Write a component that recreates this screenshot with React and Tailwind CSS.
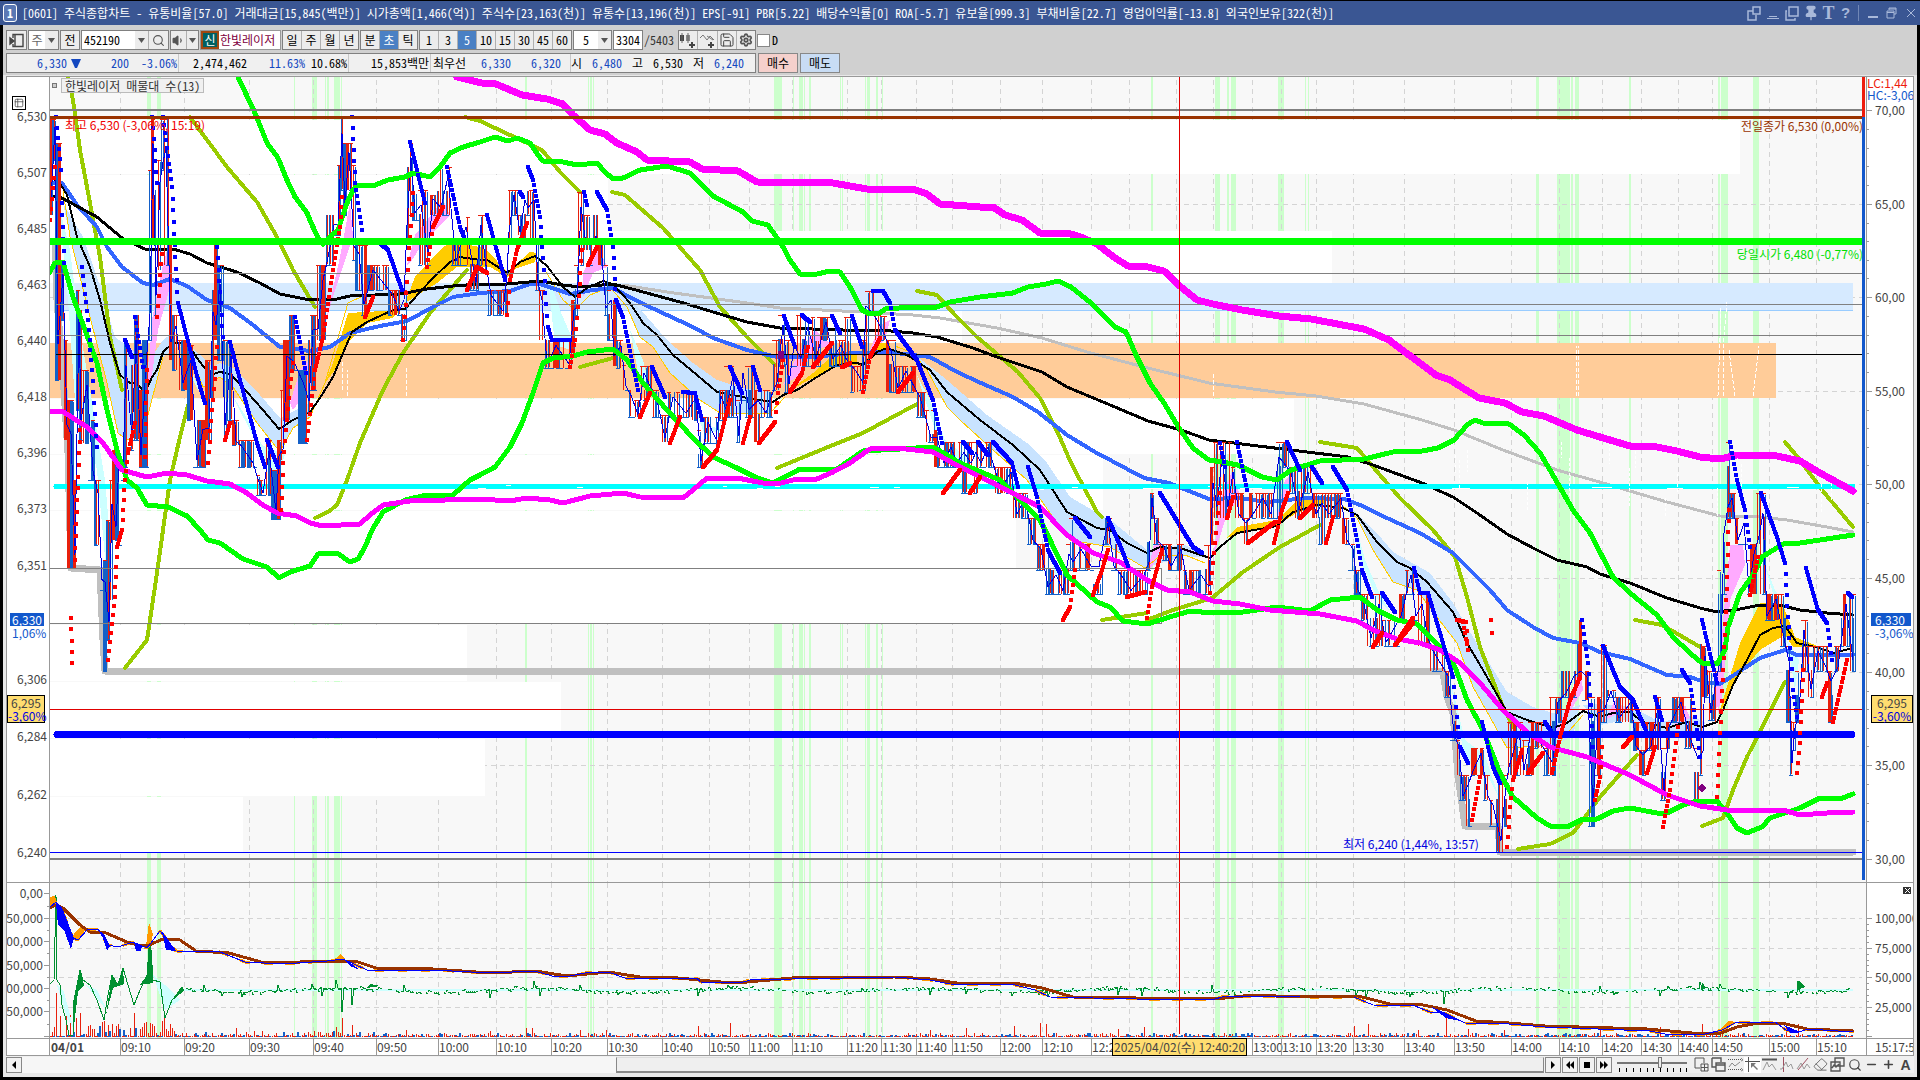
import React, { useState } from 'react';
import { Settings, Save, Search, Pin, Volume1, Eraser, Minus, Plus, Table2 } from 'lucide-react';

// plot area of the price chart, in chart units
const PLOT = { x: 50, y: 77, w: 1816, h: 805 };
const SUB = { x: 50, y: 883, w: 1816, h: 155 };

const titleText =
  '[0601] 주식종합차트 - 유통비율[57.0] 거래대금[15,845(백만)] 시가총액[1,466(억)] 주식수[23,163(천)] 유통수[13,196(천)] EPS[-91] PBR[5.22] 배당수익률[0] ROA[-5.7] 유보율[999.3] 부채비율[22.7] 영업이익률[-13.8] 외국인보유[322(천)]';

const timeTicks = [
  [120, '09:10'], [184, '09:20'], [249, '09:30'], [313, '09:40'], [376, '09:50'], [438, '10:00'], [496, '10:10'],
  [551, '10:20'], [607, '10:30'], [662, '10:40'], [709, '10:50'], [749, '11:00'], [792, '11:10'], [847, '11:20'],
  [881, '11:30'], [916, '11:40'], [952, '11:50'], [1000, '12:00'], [1042, '12:10'], [1091, '12:2'], [1129, ''],
  [1176, ''], [1213, ''], [1252, '13:00'], [1281, '13:10'], [1316, '13:20'], [1353, '13:30'], [1404, '13:40'],
  [1454, '13:50'], [1511, '14:00'], [1559, '14:10'], [1602, '14:20'], [1641, '14:30'], [1678, '14:40'],
  [1712, '14:50'], [1769, '15:00'], [1816, '15:10'],
];

const priceLabels = [
  [116, '6,530'], [172, '6,507'], [228, '6,485'], [284, '6,463'], [340, '6,440'], [396, '6,418'], [452, '6,396'],
  [508, '6,373'], [565, '6,351'], [679, '6,306'], [736, '6,284'], [794, '6,262'], [852, '6,240'],
];

const ratioLabels = [
  [110, '70,00'], [204, '65,00'], [297, '60,00'], [391, '55,00'], [484, '50,00'], [578, '45,00'], [672, '40,00'],
  [765, '35,00'], [859, '30,00'],
];

const subLeft = [[893, '0,00'], [918, '50,000'], [941, '00,000'], [965, '50,000'], [988, '00,000'], [1011, '50,000']];
const subRight = [[918, '100,000'], [948, '75,000'], [977, '50,000'], [1007, '25,000']];

const signals = [
  [147, 4], [157, 4], [294, 1], [312, 5], [325, 1], [327, 2], [334, 6], [341, 1], [525, 2], [588, 1], [590, 2],
  [593, 1], [774, 8], [793, 1], [799, 4], [804, 1], [809, 2], [840, 1], [842, 1], [865, 1], [867, 3], [876, 2],
  [882, 1], [1151, 2], [1215, 5], [1227, 2], [1231, 5], [1278, 6], [1305, 1], [1308, 1], [1536, 3], [1557, 13],
  [1571, 2], [1575, 4], [1629, 2], [1718, 2], [1721, 7], [1753, 6],
];

// volume profile blocks: top, height, right end
const profile = [
  [120, 54, 1740], [175, 56, 608], [231, 52, 1332], [311, 32, 962], [399, 55, 1294], [455, 55, 1103],
  [511, 57, 1016], [569, 54, 1161], [625, 56, 467], [682, 56, 561], [739, 57, 485], [797, 55, 243],
];

const upperMagenta =
  '457,77 482,83 496,84 522,95 547,99 563,104 573,115 590,130 605,134 617,143 637,152 647,160 690,162 702,169 738,171 757,182 833,183 867,189 913,189 927,194 940,204 980,207 993,207 1005,215 1022,220 1040,233 1071,234 1083,238 1097,244 1115,258 1128,266 1148,267 1164,271 1181,287 1197,300 1213,304 1242,310 1279,316 1311,319 1364,329 1389,340 1409,355 1436,375 1450,380 1479,398 1505,403 1522,412 1544,416 1577,430 1600,437 1630,446 1657,447 1677,451 1700,457 1720,459 1737,455 1777,456 1800,461 1820,473 1853,491';
const lowerMagenta =
  '49,411 62,411 87,427 103,443 122,470 147,477 167,473 187,475 207,481 230,484 247,493 263,505 277,513 297,516 310,523 323,526 360,524 370,515 383,505 410,501 480,499 510,501 527,498 550,500 563,503 590,496 623,493 640,497 683,498 693,490 707,478 737,478 763,483 777,484 797,479 817,479 833,472 850,463 870,449 897,448 933,452 960,467 993,483 1020,497 1040,507 1067,535 1093,553 1120,562 1147,580 1167,590 1190,592 1213,601 1240,604 1270,610 1320,614 1357,621 1373,630 1397,639 1420,643 1440,650 1460,663 1480,683 1503,710 1527,732 1550,747 1587,757 1630,775 1667,795 1700,806 1727,810 1783,810 1800,815 1827,813 1853,812';
const upperGreen =
  '238,77 255,113 267,143 278,158 287,180 295,197 307,213 313,227 318,238 323,244 330,237 338,230 347,203 353,190 358,185 373,186 388,180 405,177 413,173 430,177 440,167 450,153 463,147 480,142 495,137 508,141 517,138 530,143 538,155 543,161 563,162 577,165 597,163 605,172 613,179 623,178 640,170 667,166 690,173 713,196 743,212 752,221 768,225 775,235 782,245 790,260 800,274 817,274 830,271 840,272 850,287 862,310 870,314 880,313 885,309 913,307 937,307 950,302 980,297 1013,293 1028,287 1046,284 1058,281 1071,287 1091,303 1115,327 1126,332 1136,355 1150,383 1164,403 1179,428 1193,448 1209,460 1222,462 1238,465 1262,477 1277,480 1291,470 1307,465 1320,461 1364,459 1393,452 1422,451 1438,448 1454,440 1467,425 1475,420 1483,423 1509,424 1524,435 1540,453 1550,470 1573,510 1590,533 1613,577 1630,593 1657,615 1673,637 1690,653 1702,663 1717,664 1725,650 1728,627 1740,593 1753,575 1762,557 1783,544 1800,543 1853,535';
const lowerGreen =
  '49,273 55,263 63,262 73,297 85,330 97,363 107,410 117,450 127,480 137,488 147,505 168,507 187,516 200,530 208,540 220,543 243,559 267,567 279,578 290,572 310,566 318,554 337,553 350,562 358,559 365,547 372,530 383,512 405,500 427,495 453,495 462,487 470,480 480,475 495,467 510,447 522,423 533,393 543,363 553,358 573,356 587,352 613,349 627,360 643,383 667,410 693,438 713,457 737,468 757,478 773,483 783,478 800,469 837,469 850,460 863,451 900,449 933,447 947,455 960,463 1000,480 1017,497 1040,520 1050,540 1067,575 1097,602 1110,607 1123,621 1147,624 1173,616 1190,611 1213,613 1243,612 1277,607 1310,611 1330,600 1360,597 1377,610 1397,620 1417,624 1440,647 1455,667 1467,700 1483,730 1500,773 1513,797 1537,818 1550,826 1567,827 1583,819 1597,819 1613,811 1630,808 1657,813 1667,813 1683,805 1697,801 1717,801 1727,813 1737,828 1747,833 1762,827 1770,818 1800,808 1820,798 1843,798 1853,794';
const slowBlack =
  '49,196 60,197 73,204 97,217 122,238 147,250 173,249 190,254 207,263 237,272 260,283 280,294 310,300 337,299 350,296 400,294 427,289 453,286 480,284 507,284 540,281 563,285 580,287 613,284 647,293 687,304 713,312 747,322 780,328 843,330 867,331 880,330 913,333 937,337 973,348 997,357 1042,372 1067,387 1115,407 1148,421 1181,430 1209,440 1242,444 1307,452 1348,457 1373,465 1422,483 1453,497 1477,513 1507,534 1533,548 1557,560 1587,567 1600,574 1630,583 1667,598 1700,608 1717,612 1740,609 1760,605 1783,606 1800,610 1827,613 1853,615';
const fastBlack =
  '49,179 58,180 67,195 77,237 90,267 100,300 110,343 120,375 130,383 137,383 145,393 152,377 157,370 163,352 173,343 187,343 197,358 210,375 220,372 230,374 247,392 263,410 279,429 293,420 310,412 320,398 333,377 343,353 352,332 367,322 393,310 405,309 420,292 433,278 450,262 460,257 480,260 487,260 495,265 507,273 520,262 535,256 547,266 563,287 575,297 587,288 603,281 613,284 630,303 643,323 657,335 673,355 697,375 717,392 733,395 747,398 773,402 783,395 797,390 817,377 837,365 857,363 863,365 877,352 887,348 907,355 930,370 947,392 980,420 1013,445 1040,470 1067,512 1097,528 1110,530 1127,543 1147,553 1160,547 1183,549 1210,558 1220,547 1237,533 1277,526 1293,512 1317,505 1343,508 1357,515 1377,542 1397,562 1410,568 1427,582 1453,612 1467,643 1483,670 1507,712 1527,720 1553,728 1567,723 1583,711 1600,717 1613,713 1630,712 1643,722 1667,728 1687,722 1702,727 1717,722 1723,710 1733,685 1747,660 1760,635 1773,628 1785,626 1797,643 1820,648 1833,653 1853,648';
const blueMa =
  '49,183 62,183 77,205 97,227 107,247 122,267 143,283 153,285 170,279 187,286 207,300 230,308 253,325 280,347 310,351 330,347 350,333 380,326 407,321 433,307 453,297 480,293 510,291 530,284 540,284 570,294 593,290 613,288 637,301 667,315 693,327 713,338 747,350 777,357 813,357 853,353 887,352 930,357 957,372 981,383 1013,397 1038,412 1067,435 1095,452 1144,478 1169,483 1209,499 1238,498 1267,502 1307,498 1344,499 1360,505 1389,519 1420,533 1453,553 1477,577 1490,590 1507,610 1533,627 1553,638 1580,643 1600,652 1630,659 1667,675 1690,677 1707,683 1720,684 1737,673 1760,658 1785,650 1797,655 1853,655';
const grayMa =
  '623,285 667,292 747,303 780,308 863,312 913,315 940,318 997,328 1042,338 1087,352 1144,367 1209,383 1275,392 1316,396 1364,404 1422,420 1454,430 1503,450 1557,470 1603,483 1667,502 1720,516 1760,517 1787,520 1827,527 1853,532';
const lowTrail =
  '55,245 57,300 64,390 68,453 71,568 100,570 103,640 105,671 1443,672 1447,697 1453,713 1458,775 1465,826 1498,826 1500,852 1853,852';

const arcs = [
  '68,77 73,100 80,150 90,203 100,257 110,337 122,390',
  '125,668 147,640 157,573 163,530 170,480 180,437 188,405',
  '190,117 227,167 257,202 277,237 293,270 315,307',
  '315,518 328,512 337,505 347,480 360,443 383,390 403,353 430,313 467,270',
  '465,117 480,121 510,135 542,150 560,172 580,192',
  '612,192 625,195 663,228 700,270 720,307 747,337 775,365',
  '580,367 613,358',
  '777,468 833,445 863,433 917,404',
  '917,291 937,295 955,315 977,337 1018,372 1040,398 1058,433 1071,463 1097,512 1102,517',
  '1102,620 1147,613',
  '1147,620 1173,610 1212,598 1243,572 1280,547 1320,525',
  '1320,442 1357,448 1373,467 1400,498 1433,530 1455,557 1467,597 1480,647 1503,707 1513,727',
  '1518,849 1550,844 1573,833 1600,797 1637,755',
  '1635,620 1662,625 1702,648',
  '1702,826 1723,818 1733,790 1747,757 1785,682',
  '1785,442 1800,460 1822,490 1853,527',
];

const blueClouds = [
  '63,203 83,237 97,277 115,337 133,350 143,370 163,340 170,335 180,345 163,357 150,407 143,435 127,440 118,433 107,383 90,317 70,237',
  '187,343 213,367 220,363 233,368 253,387 280,418 310,403 310,417 293,428 280,452 257,423 233,387 220,377 203,387',
  '617,287 647,317 667,340 693,363 717,380 743,388 773,393 770,413 747,413 720,413 700,400 670,373 653,347 640,337 627,307',
  '913,353 947,380 987,415 1027,443 1047,463 1070,497 1113,522 1147,550 1185,545 1210,558 1185,556 1145,568 1110,547 1070,540 1050,513 1027,480 993,450 960,420 947,407 927,370',
  '1353,510 1377,533 1393,552 1430,573 1453,603 1473,637 1507,692 1533,707 1553,713 1580,705 1573,735 1557,745 1507,748 1490,717 1473,687 1457,643 1433,612 1417,590 1393,582 1373,550',
  '1583,705 1600,704 1630,706 1660,722 1690,716 1705,722 1702,733 1665,735 1643,730 1625,720 1600,725',
];
const goldClouds = [
  '325,383 333,363 348,313 400,310 393,318 367,323 350,340 337,367',
  '405,303 415,277 443,247 453,242 480,247 487,250 507,272 530,252 537,253 535,262 517,268 507,277 490,267 457,267 437,283',
  '790,390 813,373 833,355 857,355 857,365 833,367 813,378',
  '863,363 880,343 890,343 890,348 877,353',
  '1227,538 1237,527 1277,520 1297,500 1327,497 1323,505 1297,513 1277,525 1240,533',
  '1720,710 1740,643 1760,603 1783,605 1795,637 1820,647 1793,647 1785,635 1760,650 1733,683 1723,707',
];
const goldTrails = [
  '63,190 70,237 90,317 107,383 118,433 127,440 143,435 150,407 163,357',
  '187,345 203,387 220,377 233,387 257,423 280,452 293,428 310,417 325,383 348,303 365,295',
  '545,270 563,300 575,310 590,295 610,287 627,307 640,337 653,347 670,373 700,400 720,413 770,413 785,397',
  '895,346 913,353 927,370 947,407 960,420 993,450 1027,480 1050,513 1070,540 1110,547 1145,568 1160,556 1185,555 1205,563',
  '1343,506 1357,518 1373,550 1393,582 1417,590 1433,612 1457,643 1473,687 1490,717 1507,748 1557,745 1583,715',
];
const pinkClouds = [
  '147,393 152,320 163,265 170,240 172,280 158,330 152,375',
  '290,403 300,370 320,347 340,257 350,203 353,237 333,297 317,353 310,387 293,410',
  '407,265 415,235 443,200 450,215 425,240 410,263',
  '583,273 597,243 607,267 593,273 583,297',
  '783,385 800,350 815,330 832,345 815,350 797,377',
  '868,355 880,325 890,320 885,340',
  '1148,570 1155,540 1162,545 1153,565',
  '1213,560 1220,500 1232,472 1240,495 1225,520',
  '1275,525 1285,480 1297,470 1290,485',
  '1550,745 1570,700 1580,665 1583,690 1565,720',
  '1605,720 1615,700 1625,710',
  '1672,728 1685,705 1690,718',
  '1718,715 1723,620 1730,545 1743,545 1745,565 1730,600 1724,680',
  '1705,725 1712,715 1715,690 1722,640 1722,700',
];
const cyanClouds = [
  '60,210 68,300 75,400 90,440 97,470 108,590 112,560 105,480 95,420 80,330 70,250',
  '180,345 200,390 215,395 205,402 190,375',
  '232,395 255,440 275,480 285,455 262,445 245,415',
  '547,270 562,315 575,345 570,350 555,345',
  '630,330 640,383 652,395 643,360',
  '695,410 705,435 722,430 708,425',
  '917,375 930,400 945,440 970,460 960,463 935,430',
  '1042,510 1055,560 1066,580 1055,575',
  '1352,510 1365,560 1378,590 1390,612 1378,600 1360,560',
  '1448,670 1465,740 1485,755 1500,800 1490,780 1465,760',
  '1763,560 1775,590 1785,605 1775,600',
  '1787,640 1795,690 1799,660',
];

// trailing stop dots
const fallRuns = [
  '56,117 61,170', '62,203 64,263', '82,267 88,320 92,370 97,447', '125,340 132,357', '135,317 143,367',
  '152,117 157,183', '163,117 172,187 175,257 178,303 200,387 205,403', '217,247 223,337',
  '230,342 240,380 257,443 265,467', '267,440 278,467', '295,317 306,373', '352,117 355,183 362,230',
  '380,243 388,250 402,290', '410,142 425,203', '447,167 460,227 465,240', '487,215 505,280', '520,192 523,197',
  '528,167 533,180 540,217 542,247 548,327 552,340 570,340', '584,192 587,205',
  '597,192 607,210 613,247 616,300 623,317 638,390', '652,367 665,397', '683,392 695,393 702,420',
  '730,367 742,393', '753,367 760,390', '784,316 795,347', '802,315 810,322', '832,316 840,333', '852,316 862,347',
  '873,291 883,291 890,303 895,330 917,360 933,400 942,443', '963,442 972,453', '978,442 988,455',
  '993,442 1012,463 1018,487', '1028,467 1037,497 1048,550 1060,573', '1075,518 1090,537', '1108,518 1122,550 1128,566',
  '1160,493 1193,547 1202,553', '1220,443 1225,467', '1237,442 1247,490', '1287,442 1300,470', '1312,467 1322,483',
  '1333,467 1347,490 1357,540 1362,570 1372,597', '1382,593 1395,612',
  '1414,568 1420,593 1428,593 1440,633 1453,677 1460,747 1468,763', '1482,722 1493,767 1500,783', '1545,722 1552,733',
  '1582,620 1588,663 1593,747', '1603,646 1620,687 1633,700 1647,733', '1655,697 1662,720',
  '1682,670 1690,683 1697,730 1700,757', '1702,620 1717,683', '1730,442 1737,480 1745,510 1750,547',
  '1761,493 1777,537 1785,563 1788,617 1793,690 1797,717', '1806,568 1818,610 1827,623 1832,660', '1848,593 1852,597',
];
const riseRuns = [
  '50,220 55,167', '75,560 77,500 80,430', '71,618 72,663', '108,660 115,597 117,547 122,530 125,480 128,453 135,423',
  '145,457 147,370', '157,317 163,243', '208,463 217,347', '225,440 230,423', '281,510 283,463 290,387 293,363',
  '307,440 315,370 323,337 333,270 340,227 342,197', '365,317 373,297', '403,340 408,270 413,193',
  '427,267 433,227 443,207', '467,290 477,267 487,273', '507,315 510,280 517,250 527,223',
  '570,367 575,340 578,307 582,250', '588,265 597,247', '640,417 650,393', '670,443 680,417',
  '703,467 717,450 723,427 730,400', '743,443 750,417', '759,443 775,422 778,393 783,360', '790,392 802,373 808,347',
  '813,367 832,343', '842,367 850,363', '863,392 870,357 880,338', '898,392 913,373', '943,493 960,470',
  '970,493 980,477', '1063,620 1070,607 1075,570', '1093,595 1102,570 1108,550', '1147,618 1152,587 1162,550',
  '1127,597 1145,592', '1210,593 1215,543 1220,493', '1227,518 1233,497', '1248,543 1275,522',
  '1274,543 1282,510 1288,493', '1300,518 1313,505', '1326,543 1333,517', '1373,647 1382,633', '1395,645 1413,623',
  '1400,637 1413,618', '1457,620 1466,622 1468,650 1463,622', '1491,620 1492,633', '1472,820 1480,777',
  '1507,847 1510,807 1513,780 1522,750', '1528,773 1543,753', '1552,773 1560,737 1570,700 1580,677',
  '1595,800 1600,777 1602,747', '1623,747 1632,737', '1647,773 1655,747', '1663,827 1670,790 1678,727',
  '1717,797 1720,743 1723,670 1727,577 1729,510', '1750,595 1758,557', '1797,773 1800,743 1803,670',
  '1822,697 1827,683', '1833,722 1847,660',
];

// traded range along the day: x, high, low
const range =
  '50,119,215 54,119,160 57,143,380 62,263,320 66,340,440 70,400,568 74,480,568 78,290,410 80,310,440 86,370,443 92,420,480 97,480,545 101,520,590 104,560,671 108,520,640 111,480,600 115,450,540 118,440,545 122,390,480 125,340,467 131,365,450 135,315,440 140,390,467 145,340,467 149,170,340 152,119,240 155,190,315 159,160,270 162,119,170 165,119,265 170,240,360 175,315,370 182,340,390 190,345,420 196,420,467 202,420,467 208,360,440 212,290,400 215,240,340 219,265,360 224,340,440 230,340,420 235,420,445 240,440,467 252,440,467 257,475,495 262,480,495 268,440,495 275,470,519 278,440,519 282,390,460 286,340,420 293,315,370 303,370,443 308,340,412 312,315,390 317,265,340 322,265,340 327,215,265 333,215,265 337,165,235 341,119,190 344,143,215 348,143,190 353,165,260 358,245,290 363,245,315 372,265,290 385,265,290 392,290,315 398,290,315 403,290,340 406,143,240 410,143,215 414,170,220 420,190,265 427,190,265 432,195,215 440,167,215 447,167,215 455,240,265 465,217,265 475,240,290 480,215,265 485,240,270 490,290,315 502,290,315 506,265,315 508,190,240 513,190,215 519,215,235 524,190,240 527,167,215 533,190,240 537,240,290 541,290,340 546,340,368 555,340,368 568,340,368 573,300,350 576,265,315 580,192,265 585,215,250 590,240,265 595,215,240 600,240,265 605,265,315 610,290,340 613,300,366 620,340,368 625,365,390 630,390,417 637,400,417 643,366,400 650,366,392 655,390,417 664,415,442 672,392,417 685,392,417 695,392,420 700,430,467 707,417,443 715,417,443 720,390,420 725,366,417 732,366,417 738,400,442 742,366,400 748,366,417 757,390,442 765,390,417 770,392,417 776,340,390 782,315,366 788,340,392 793,340,366 800,315,366 807,317,366 815,317,366 825,317,340 832,320,366 840,340,366 845,317,366 855,366,392 862,340,390 865,291,366 870,291,315 876,315,340 884,316,340 890,340,392 897,366,392 905,366,392 914,366,392 919,392,417 930,410,442 936,430,467 943,442,467 950,442,467 956,442,467 963,442,493 970,442,467 975,442,493 980,442,467 987,442,467 1000,467,493 1010,467,493 1016,493,518 1024,493,518 1032,518,544 1040,544,570 1047,544,594 1055,570,594 1062,570,594 1068,544,594 1072,518,570 1080,544,570 1090,544,570 1098,560,594 1103,520,544 1107,518,544 1113,544,570 1120,570,594 1130,570,594 1143,570,594 1148,518,570 1151,493,518 1156,518,544 1163,544,560 1170,544,570 1180,544,570 1188,570,594 1200,570,594 1208,545,594 1212,467,545 1216,442,518 1221,442,518 1227,442,518 1232,467,493 1238,493,518 1245,518,544 1252,493,518 1262,493,518 1270,493,518 1278,442,518 1283,442,467 1290,467,493 1298,467,518 1307,467,493 1315,493,518 1321,493,544 1328,493,518 1340,493,518 1346,518,544 1352,544,570 1357,570,594 1362,594,620 1370,594,646 1378,594,646 1385,620,646 1395,620,646 1400,594,620 1410,570,594 1415,594,620 1421,594,646 1427,594,646 1432,646,671 1442,646,671 1447,671,697 1453,697,740 1458,740,775 1462,775,800 1467,775,826 1472,748,775 1480,748,775 1487,775,800 1492,800,826 1500,775,852 1505,775,826 1508,722,775 1518,722,775 1523,740,775 1530,722,775 1540,722,748 1546,748,775 1552,697,775 1557,697,722 1565,671,697 1573,671,697 1580,620,680 1586,671,700 1592,697,826 1597,697,775 1603,645,722 1610,690,697 1618,697,722 1630,697,722 1635,722,750 1642,750,775 1650,722,750 1657,697,750 1663,748,800 1668,722,748 1672,697,722 1680,697,722 1690,697,748 1697,748,800 1702,620,775 1704,646,697 1710,671,720 1715,671,722 1720,570,671 1723,518,594 1727,442,518 1731,493,518 1737,518,544 1743,518,544 1748,560,594 1753,544,594 1758,493,544 1762,493,594 1766,594,620 1775,594,620 1783,594,646 1788,646,722 1791,697,775 1794,722,750 1798,671,722 1803,620,671 1810,646,697 1817,646,671 1825,646,671 1830,671,722 1837,646,671 1845,594,646 1852,594,671';

const subBrown =
  '49,908 56,905 63,908 80,925 90,932 106,933 127,942 141,946 149,945 163,939 180,940 196,951 229,953 261,962 282,963 318,961 355,961 376,968 433,969 490,973 535,971 567,976 608,972 640,977 667,977 721,982 747,982 792,978 895,977 930,979 957,983 1020,984 1042,988 1073,997 1136,998 1216,999 1252,995 1300,997 1358,996 1390,1004 1423,1005 1447,1010 1476,1021 1509,1023 1545,1026 1647,1029 1692,1033 1721,1033 1737,1027 1758,1023 1786,1024 1807,1029 1853,1031';
const subBlue =
  '49,908 56,902 61,907 73,938 78,940 88,929 98,929 108,945 118,947 133,942 147,948 160,931 176,951 220,952 245,962 282,964 327,961 343,959 367,970 433,970 490,973 535,971 552,976 570,976 590,972 608,972 625,978 667,978 697,978 700,982 740,983 750,980 792,979 895,977 930,980 950,984 1015,985 1035,990 1050,997 1136,999 1212,1000 1225,996 1300,997 1354,997 1373,1005 1415,1006 1430,1012 1445,1013 1465,1023 1509,1024 1545,1027 1650,1031 1665,1034 1705,1034 1722,1030 1735,1023 1775,1022 1786,1030 1796,1033 1808,1029 1853,1032';
const subGreenHead =
  '49,985 54,980 56,895 57,980 60,985 62,1005 66,1020 69,1035 73,1035 74,1000 77,985 80,970 83,980 90,985 97,1000 104,1020 108,995 112,975 118,985 123,968 128,985 134,1005 140,990 147,975 150,935 153,980 160,982 165,1018 172,1000 184,990';
const greenSpikes = {
  205: 985, 222: 996, 242: 997, 279: 985, 313: 984, 323: 996, 337: 980, 343: 1012, 352: 1005, 364: 988, 405: 985,
  491: 998, 535: 981, 541: 996, 581: 985, 619: 995, 699: 996, 729: 985, 863: 988, 931: 995, 967: 994, 1013: 996,
  1049: 997, 1119: 995, 1143: 996, 1213: 985, 1357: 996, 1367: 998, 1411: 997, 1445: 1004, 1601: 986, 1615: 995,
  1661: 996, 1669: 986, 1701: 982, 1721: 984, 1789: 998, 1799: 981, 1843: 993,
};
const volumeSpikes = {
  56: 993, 60: 1016, 66: 1006, 70: 1015, 76: 1018, 80: 1013, 90: 1025, 102: 1022, 104: 1021, 112: 1024, 134: 1013,
  144: 1023, 146: 1022, 150: 1023, 152: 1024, 162: 1021, 164: 1018, 170: 1024, 236: 1028, 336: 1027, 342: 1018,
  352: 1025, 406: 1030, 490: 1031, 526: 1028, 532: 1028, 580: 1030, 606: 1030, 698: 1026, 730: 1023, 930: 1030,
  966: 1028, 1014: 1026, 1040: 1023, 1046: 1024, 1118: 1029, 1144: 1027, 1354: 1026, 1368: 1024, 1418: 1030,
  1446: 1014, 1468: 1029, 1504: 1030, 1600: 1030, 1660: 1027, 1702: 1024, 1722: 1027, 1786: 1026, 1798: 1024,
};

const parse = (s) => s.split(' ').map((p) => p.split(',').map(Number));

const noise = (n) => {
  const v = Math.sin(n * 12.9898) * 43758.5453;
  return v - Math.floor(v);
};

// early trading is dense, so bars are drawn bold there and thin afterwards
const buildCandles = () => {
  const pts = parse(range);
  const out = { red: '', blue: '', redBold: '', blueBold: '' };
  let i = 0;
  for (let x = 50; x <= 1853; x += 3) {
    while (i < pts.length - 1 && Math.abs(pts[i + 1][0] - x) <= Math.abs(pts[i][0] - x)) i++;
    const [, hi, lo] = pts[i];
    const tall = lo - hi > 30;
    const r = noise(x);
    const bold = noise(x + 11) < (x < 370 ? 0.6 : 0.22);
    const top = tall && x > 370 && r > 0.4 ? hi + 24 : hi;
    const bar = `M${x + 0.5} ${top}V${lo}`;
    if (r < 0.45) out[bold ? 'redBold' : 'red'] += bar;
    else if (r < 0.9) out[bold ? 'blueBold' : 'blue'] += bar;
    if (r > 0.2 && r < 0.6) out.blue += `M${x + 2.5} ${hi + 2}V${lo}`;
    if (r > 0.55 && r < 0.85) out.red += `M${x + 1.5} ${top}V${lo - 1}`;
    if (r < 0.7) out.red += `M${x - 1} ${hi + 0.5}h4`;
    if (r > 0.35) out.blue += `M${x - 1} ${lo + 0.5}h4`;
  }
  return out;
};

// one dot per unit of x: flat runs merge into a line, steep ones stay dotted
const buildDots = (runs) =>
  runs
    .map((run) => {
      const pts = parse(run);
      let d = '';
      for (let i = 1; i < pts.length; i++) {
        const [x1, y1] = pts[i - 1];
        const [x2, y2] = pts[i];
        const n = Math.max(1, Math.abs(x2 - x1), Math.round(Math.abs(y2 - y1) / 11));
        for (let k = 0; k <= n; k++) {
          d += `M${Math.round(x1 + ((x2 - x1) * k) / n) - 2} ${Math.round(y1 + ((y2 - y1) * k) / n)}h4`;
        }
      }
      return d;
    })
    .join('');

const buildPriceLine = () =>
  parse(range)
    .map(([x, hi, lo], i) => `${x + 1},${i % 2 ? hi + (lo - hi) * 0.2 : hi + (lo - hi) * 0.85}`)
    .join(' ');

const buildOscillator = () => {
  let d = '';
  for (let x = 186; x <= 1853; x += 2) {
    const spike = greenSpikes[x] || greenSpikes[x + 1];
    const base = 990 + Math.round(Math.sin(x / 31) * 2);
    if (spike) d += `M${x - 3} ${base}h2L${x} ${spike}L${x + 2} ${base}h3`;
    else if (noise(x) > 0.35) d += `M${x} ${base}v${Math.round(noise(x + 3) * 4) - 2}h2`;
  }
  return d;
};

const buildVolume = () => {
  let red = '';
  let blue = '';
  for (let x = 50; x <= 1852; x += 2) {
    const limit = x < 180 ? 12 : x < 380 ? 5 : 3;
    const top = volumeSpikes[x] || 1036 - Math.round(noise(x + 1) ** 2 * limit);
    if (noise(x) > 0.4 || volumeSpikes[x]) red += `M${x + 0.5} 1037V${top}`;
    else blue += `M${x} 1037V${top}`;
  }
  return { red, blue };
};

const candles = buildCandles();
const fallDots = buildDots(fallRuns);
const riseDots = buildDots(riseRuns);
const priceLine = buildPriceLine();
const oscillator = buildOscillator();
const volume = buildVolume();

const topPct = (y, box) => ({ top: `${((y - box.y) / box.h) * 100}%` });
const leftPct = (x) => ({ left: `${((x - PLOT.x) / PLOT.w) * 100}%` });

const Line = ({ points, color, width, ...rest }) => (
  <polyline points={points} fill="none" stroke={color} strokeWidth={width} strokeLinejoin="round" strokeLinecap="round" {...rest} />
);

const PriceChart = () => (
  <svg className="block h-full w-full" viewBox="50 77 1816 805" preserveAspectRatio="none" shapeRendering="crispEdges" aria-label="가격 차트">
    <rect x="50" y="77" width="1816" height="805" fill="#f8f8f8" />
    {signals.map(([x, w]) => <rect key={x} x={x} y="77" width={w} height="805" fill="#ccffcc" />)}
    {timeTicks.map(([x]) => <path key={x} d={`M${x + 0.5} 80V882`} stroke="#d4d4d4" strokeDasharray="5 4" />)}
    {ratioLabels.slice(1).map(([y]) => <path key={y} d={`M50 ${y + 0.5}H1862`} stroke="#d4d4d4" strokeDasharray="5 4" />)}
    {profile.map(([y, h, end]) => <rect key={y} x="50" y={y} width={end - 50} height={h} fill="#fff" />)}
    <rect x="56" y="283" width="1797" height="27" fill="#d6eaff" />
    <path d="M56 310.5H1853" stroke="#99ccff" />
    <rect x="50" y="343" width="1726" height="55" fill="#ffcc99" />

    {blueClouds.map((p) => <polygon key={p} points={p} fill="#c8e3ff" />)}
    {cyanClouds.map((p) => <polygon key={p} points={p} fill="#ccffff" />)}
    {pinkClouds.map((p) => <polygon key={p} points={p} fill="#ffaaff" />)}
    {goldClouds.map((p) => <polygon key={p} points={p} fill="#ffcc00" />)}
    {goldTrails.map((p) => <Line key={p} points={p} color="#ffcc00" width="1" />)}

    <Line points={lowTrail} color="#c0c0c0" width="7" />
    <Line points={grayMa} color="#c0c0c0" width="3" />
    {arcs.map((p) => <Line key={p} points={p} color="#99cc00" width="4" />)}
    <Line points={blueMa} color="#3366ff" width="4" />
    <Line points={slowBlack} color="#000" width="3" />
    <Line points={fastBlack} color="#000" width="2" />
    <Line points="56,486.5 1853,486.5" color="#00ffff" width="5" />
    <path d="M478 488h8m20 -3h5m66 2h6m140 -1h4m30 2h6m12 -2h5m90 1h9m15 0h6m140 2h4m28 -2h6m65 1h20m45 -2h14m18 2h22m190 0h18m30 1h12m80 -2h20m55 1h16m50 1h24m30 -2h12" stroke="#fff" strokeWidth="1" fill="none" />
    <path d="M1455 455v20m4-15v30m8-40v22m60 10v30m34-70v16m8 0v40m40-60v26m20 4v38m6-60v22m30 30v20m12-44v20m40-6v36m24-60v40m80-20v30m10-36v22m60-18v24" stroke="#fff" strokeDasharray="3 2" fill="none" />
    <path d="M342 390v-30m5 36v-26m59 26v-30m807 30v-22M1576 396v-50m2 50v-50M1718 396l3-90m2 90v-46l4-50m2 50l6 46m18 0l6-50" stroke="#fff" strokeDasharray="4 2" fill="none" />

    <path d={candles.blue} stroke="#1460c8" fill="none" />
    <path d={candles.blueBold} stroke="#1460c8" strokeWidth="3" fill="none" />
    <path d={candles.red} stroke="#e8200c" fill="none" />
    <path d={candles.redBold} stroke="#e8200c" strokeWidth="3" fill="none" />
    <Line points={priceLine} color="#0000e0" width="1" />

    <path d="M56 273.5H1862M56 304.5H1862M56 335.5H1862" stroke="#808080" />
    <path d="M50 568.5H1161.5M50 623.5H1161.5M1161.5 568V624" stroke="#808080" fill="none" />
    <path d="M56 354.5H1862" stroke="#000" />
    <Line points={upperGreen} color="#00ff00" width="5" />
    <Line points={lowerGreen} color="#00ff00" width="5" />
    <Line points={upperMagenta} color="#ff00ff" width="7" />
    <Line points={lowerMagenta} color="#ff00ff" width="5" />
    <Line points="57,734.5 1852,734.5" color="#0000ff" width="7" />
    <path d={fallDots} stroke="#0000ff" strokeWidth="4" />
    <path d={riseDots} stroke="#ff0000" strokeWidth="4" />
    <rect x="778" y="351" width="6" height="8" fill="#800080" />
    <path d="M1702 783l4 5-4 4-5-4z" fill="#800080" />

    <path d="M50 241.5H1862" stroke="#00ff00" strokeWidth="7" />
    <path d="M50 110H1862M50 859H1862" stroke="#808080" strokeWidth="2" />
    <path d="M50 117.5H1862" stroke="#993300" strokeWidth="3" />
    <path d="M50 852.5H1862" stroke="#0000ff" />
    <path d="M50 709.5H1862M1179.5 77V882" stroke="#e00000" />
    <path d="M1863.5 77V117" stroke="#ee1c0c" strokeWidth="3" />
    <path d="M1863.5 117V880" stroke="#1258cc" strokeWidth="3" />
  </svg>
);

const SubChart = () => (
  <svg className="block h-full w-full" viewBox="50 883 1816 155" preserveAspectRatio="none" shapeRendering="crispEdges" aria-label="보조 지표">
    <rect x="50" y="883" width="1816" height="155" fill="#f8f8f8" />
    {signals.map(([x, w]) => <rect key={x} x={x} y="883" width={w} height="155" fill="#ccffcc" />)}
    {timeTicks.map(([x]) => <path key={x} d={`M${x + 0.5} 883V1038`} stroke="#d4d4d4" strokeDasharray="5 4" />)}
    {subRight.map(([y]) => <path key={y} d={`M50 ${y + 0.5}H1862`} stroke="#d4d4d4" strokeDasharray="5 4" />)}
    <path d={volume.blue} stroke="#1460c8" strokeWidth="2" />
    <path d={volume.red} stroke="#e8200c" strokeWidth="1" />
    <path d="M50 1036.5H1853" stroke="#1460c8" strokeDasharray="5 4" />
    <path d="M50 1036.5H1853" stroke="#e8200c" strokeDasharray="3 6" />
    <polygon points="57,985 64,992 74,1030 66,1015" fill="#ccffff" />
    <polygon points="86,985 97,990 108,1012 98,1000" fill="#ccffff" />
    <polygon points="153,975 165,985 180,1000 165,1010" fill="#ccffff" />
    <path d="M184 990H1853" stroke="#ccffff" strokeWidth="2" />
    <Line points={subGreenHead} color="#009030" width="1" />
    <polygon points="73,1035 74,1000 80,970 84,985 78,992" fill="#009030" />
    <polygon points="106,1015 112,975 118,985 123,968 124,984 113,988" fill="#009030" />
    <polygon points="140,985 147,975 150,940 153,983" fill="#009030" />
    <polygon points="172,1000 182,986 184,990" fill="#009030" />
    <polygon points="356,998 370,984 380,986 366,988" fill="#009030" />
    <polygon points="1798,990 1799,980 1805,987" fill="#009030" />
    <polygon points="1701,990 1702,982 1706,988" fill="#009030" />
    <path d={oscillator} stroke="#009030" fill="none" />
    <polygon points="49,897 55,896 57,905 49,908" fill="#ff9900" />
    <polygon points="72,938 75,932 82,925 86,928 79,941" fill="#ff9900" />
    <polygon points="146,946 149,922 153,934 151,944" fill="#ff9900" />
    <polygon points="334,961 340,954 346,959" fill="#ff9900" />
    <polygon points="1719,1031 1728,1021 1738,1022 1728,1028" fill="#ff9900" />
    <Line points={subBlue} color="#ff9900" width="3" strokeDasharray="9 14" />
    <Line points={subBrown} color="#993300" width="3" />
    <polygon points="56,903 63,910 74,938 71,949 64,930 58,925" fill="#0000ff" />
    <polygon points="101,932 105,936 110,946 107,951" fill="#0000ff" />
    <polygon points="134,942 142,946 141,951 136,951" fill="#0000ff" />
    <polygon points="162,931 176,951 166,950" fill="#0000ff" />
    <polygon points="343,959 352,964 360,970 350,966" fill="#0000ff" />
    <polygon points="1430,1006 1452,1016 1460,1021 1446,1018" fill="#0000ff" />
    <polygon points="1784,1025 1800,1032 1790,1033" fill="#0000ff" />
    <Line points={subBlue} color="#0000ff" width="1" />
    <path d="M1179.5 883V1034" stroke="#e00000" />
  </svg>
);

const ToolButton = ({ active, children, className = 'flex-1', ...rest }) => (
  <button
    type="button"
    className={`flex h-full min-w-0 items-center justify-center border-r border-[#b0b0b0] last:border-r-0 ${className} ${
      active ? 'bg-[#4a80c4] text-white' : 'bg-[#ececec] text-black'
    }`}
    {...rest}
  >
    {children}
  </button>
);

const Group = ({ children, className = '' }) => (
  <div className={`flex h-5 shrink-0 border border-[#808080] bg-white ${className}`}>{children}</div>
);

const Arrow = () => (
  <svg width="7" height="5" viewBox="0 0 7 5"><path d="M0 0h7L3.5 5z" fill="#555" /></svg>
);

const Toolbar = () => {
  const [unit, setUnit] = useState('초');
  const [span, setSpan] = useState('5');

  return (
    <div className="flex h-5 items-center gap-px pl-[3px]">
      <Group className="w-[21px]">
        <ToolButton aria-label="패널">
          <svg width="15" height="15" viewBox="0 0 15 15" fill="none" stroke="#444" strokeWidth="1.4">
            <path d="M4 5V1.5h10v12H4V11M6 1.5v12" /><path d="M1 5v6l4-3z" fill="#444" />
          </svg>
        </ToolButton>
      </Group>
      <Group className="w-[31px]">
        <span className="flex flex-1 items-center justify-center text-[#666]">주</span>
        <ToolButton className="w-[13px]" aria-label="구분"><Arrow /></ToolButton>
      </Group>
      <Group className="w-5"><ToolButton>전</ToolButton></Group>
      <Group className="w-[88px]">
        <input aria-label="종목코드" defaultValue="452190" className="w-0 min-w-0 flex-1 pl-[2px] outline-none" />
        <ToolButton className="w-[14px]" aria-label="종목 목록"><Arrow /></ToolButton>
        <ToolButton className="w-[19px]" aria-label="종목 검색"><Search size={13} color="#555" /></ToolButton>
      </Group>
      <Group className="w-[29px]">
        <ToolButton className="w-[16px]" aria-label="소리"><Volume1 size={13} fill="#555" color="#555" /></ToolButton>
        <ToolButton aria-label="소리 설정"><Arrow /></ToolButton>
      </Group>
      <div className="flex h-5 w-[81px] shrink-0 items-center overflow-hidden border border-[#999] bg-white text-[#800040]">
        <span className="flex h-full w-[18px] shrink-0 items-center justify-center border-2 border-[#a04810] bg-[#006060] text-white">신</span>
        <span className="whitespace-nowrap pl-px">한빛레이저</span>
      </div>
      <Group className="w-[77px]">
        {['일', '주', '월', '년'].map((t) => <ToolButton key={t} active={unit === t} onClick={() => setUnit(t)}>{t}</ToolButton>)}
      </Group>
      <Group className="w-[58px]">
        {['분', '초', '틱'].map((t) => <ToolButton key={t} active={unit === t} onClick={() => setUnit(t)}>{t}</ToolButton>)}
      </Group>
      <Group className="w-[153px]">
        {['1', '3', '5', '10', '15', '30', '45', '60'].map((t) => (
          <ToolButton key={t} active={span === t} onClick={() => setSpan(t)}>{t}</ToolButton>
        ))}
      </Group>
      <Group className="w-[39px]">
        <input aria-label="주기" defaultValue="5" className="w-0 min-w-0 flex-1 text-center outline-none" />
        <ToolButton className="w-[13px]" aria-label="주기 목록"><Arrow /></ToolButton>
      </Group>
      <Group className="w-[30px]">
        <input aria-label="표시 봉수" defaultValue="3304" className="w-full pl-[2px] outline-none" />
      </Group>
      <span className="w-[33px] shrink-0 text-[#333]">/5403</span>
      <Group className="w-[78px]">
        <ToolButton aria-label="봉 추가">
          <svg width="16" height="16" viewBox="0 0 16 16"><path d="M0 3h4v6H0zM9 12h6v2H9zM11 10h2v6h-2z" fill="#444" /><path d="M6 3h4v6H6z" fill="#888" /><path d="M2 1v10M8 1v10" stroke="#666" /></svg>
        </ToolButton>
        <ToolButton aria-label="지표 추가">
          <svg width="16" height="16" viewBox="0 0 16 16"><path d="M1 6l3-3 4 5 3-4 4 4M8 4l6 4" stroke="#777" fill="none" /><path d="M9 12h6v2H9zM11 10h2v6h-2z" fill="#444" /></svg>
        </ToolButton>
        <ToolButton aria-label="저장"><Save size={16} color="#444" strokeWidth={1.5} /></ToolButton>
        <ToolButton aria-label="설정"><Settings size={14} color="#555" strokeWidth={3} /></ToolButton>
      </Group>
      <label className="flex items-center gap-[2px]">
        <input type="checkbox" className="h-[13px] w-[13px] appearance-none border border-[#888] bg-white" />D
      </label>
    </div>
  );
};

const QuoteBar = () => (
  <div className="flex h-5 items-center gap-[2px] pl-[3px]">
    <div className="flex h-5 w-[750px] shrink-0 items-center border border-[#808080] bg-[#f0f0f0] text-[#1448c0]">
      <div className="flex h-full w-[172px] items-center justify-end border-r border-[#c8c8c8] pr-px">
        <span>6,330</span>
        <svg className="mx-1" width="10" height="9" viewBox="0 0 10 9"><path d="M0 0h10L6 9H4z" fill="#1448c0" /></svg>
        <span className="w-11 text-right">200</span>
        <span className="w-12 text-right">-3.06%</span>
      </div>
      <div className="flex h-full w-[170px] items-center justify-end gap-[6px] border-r border-[#c8c8c8] pr-px text-black">
        <span className="mr-4">2,474,462</span>
        <span className="text-[#1448c0]">11.63%</span>
        <span>10.68%</span>
      </div>
      <div className="flex h-full w-[82px] items-center justify-end border-r border-[#c8c8c8] pr-px text-black">15,853백만</div>
      <div className="flex h-full w-[140px] items-center border-r border-[#c8c8c8] pl-[2px]">
        <span className="w-12 text-black">최우선</span>
        <span className="w-[50px]">6,330</span>
        <span>6,320</span>
      </div>
      <div className="flex h-full flex-1 items-center">
        <span className="w-[21px] text-black">시</span>
        <span className="w-10">6,480</span>
        <span className="w-[21px] text-black">고</span>
        <span className="w-10 text-black">6,530</span>
        <span className="w-[21px] text-black">저</span>
        <span>6,240</span>
      </div>
    </div>
    <button type="button" className="h-5 w-10 border border-[#888] bg-[#f5d0cc]">매수</button>
    <button type="button" className="h-5 w-10 border border-[#888] bg-[#c8dcf4]">매도</button>
  </div>
);

const WindowButton = ({ label, children, className = 'w-[19px]' }) => (
  <button type="button" aria-label={label} className={`flex h-full items-center justify-center ${className}`}>{children}</button>
);

const TitleBar = () => (
  <header className="flex h-6 shrink-0 items-center bg-[#3a5693] pl-[3px] text-white">
    <span className="flex h-[18px] w-[14px] items-center justify-center rounded-[3px] border border-white bg-[#5a78b4] font-bold">1</span>
    <h1 className="flex-1 overflow-hidden whitespace-nowrap pl-[5px]">{titleText}</h1>
    <div className="flex h-full text-[#a9b9da]">
      <WindowButton label="화면 복사">
        <svg width="14" height="15" viewBox="0 0 14 15" fill="none" stroke="currentColor" strokeWidth="1.5"><path d="M6 1h7v7H6zM6 5H1v9h8V9" /></svg>
      </WindowButton>
      <WindowButton label="접기"><svg width="12" height="14" viewBox="0 0 12 14" fill="none" stroke="currentColor"><path d="M0 12.5h12M2 10.5h8" /></svg></WindowButton>
      <WindowButton label="새 창">
        <svg width="14" height="15" viewBox="0 0 14 15" fill="none" stroke="currentColor" strokeWidth="1.5"><path d="M4 1h9v9H4zM2 5H1v9h9v-2" /></svg>
      </WindowButton>
      <WindowButton label="고정"><Pin size={16} fill="currentColor" /></WindowButton>
      <WindowButton label="글꼴" className="w-[17px]"><span className="font-['Liberation_Serif',serif] text-[18px] font-bold leading-5">T</span></WindowButton>
      <WindowButton label="도움말" className="w-[17px]"><span className="font-['Liberation_Sans',sans-serif] text-[15px] font-bold leading-5">?</span></WindowButton>
      <span className="mx-1 my-1 w-px bg-[#7187b6]" />
      <WindowButton label="최소화"><svg width="10" height="12" viewBox="0 0 10 12"><path d="M0 9h10v2H0z" fill="currentColor" /></svg></WindowButton>
      <WindowButton label="이전 크기">
        <svg width="11" height="12" viewBox="0 0 11 12" fill="none" stroke="currentColor"><path d="M3 3V1h7v6H8M1 4h7v7H1zM1 5.5h7M3 2h7" /></svg>
      </WindowButton>
      <WindowButton label="닫기"><svg width="10" height="10" viewBox="0 0 10 10" stroke="currentColor"><path d="M1 1l8 8M9 1L1 9" /></svg></WindowButton>
    </div>
  </header>
);

const AxisLabel = ({ y, box, side, children }) => (
  <span
    className={`absolute -translate-y-1/2 whitespace-nowrap text-[#444] ${side === 'left' ? 'right-[2px]' : 'left-2'}`}
    style={topPct(y, box)}
  >
    {children}
  </span>
);

const Ticks = ({ list, box, side, between }) =>
  list.map(([y], i) => (
    <React.Fragment key={y}>
      <i className={`absolute h-px w-[5px] bg-[#999] ${side === 'left' ? 'right-0' : 'left-0'}`} style={topPct(y, box)} />
      {i < list.length - 1 &&
        Array.from({ length: between }, (_, k) => (
          <i
            key={k}
            className={`absolute h-px w-[2px] bg-[#999] ${side === 'left' ? 'right-0' : 'left-0'}`}
            style={topPct(y + ((list[i + 1][0] - y) * (k + 1)) / (between + 1), box)}
          />
        ))}
    </React.Fragment>
  ));

const CursorTag = ({ y, className }) => (
  <div className={`absolute whitespace-nowrap border border-black bg-[#ffdd70] text-center leading-[13px] text-[#444] ${className}`} style={topPct(y, PLOT)}>
    6,295<br /><span className="text-[#0000e0]">-3,60%</span>
  </div>
);

const MainPanel = () => (
  <div className="flex min-h-0 flex-1">
    <div className="relative w-[43px] shrink-0 overflow-hidden border-r border-[#999] bg-white">
      <button type="button" aria-label="데이터 표" className="absolute left-[5px] top-[19px] flex h-[14px] w-[14px] items-center justify-center border border-black">
        <Table2 size={10} color="#555" />
      </button>
      {priceLabels.map(([y, t]) => <AxisLabel key={t} y={y} box={PLOT} side="left">{t}</AxisLabel>)}
      <div className="absolute left-[3px] w-[34px] bg-[#1258cc] text-center leading-[13px] text-white" style={topPct(613, PLOT)}>6,330</div>
      <div className="absolute left-[5px] leading-[13px] text-[#1258cc]" style={topPct(626, PLOT)}>1,06%</div>
      <CursorTag y={695} className="left-0 w-[38px]" />
    </div>
    <div className="relative min-w-0 flex-1 overflow-hidden">
      <PriceChart />
      <div className="absolute left-0 top-px flex items-center gap-1 pl-[2px]">
        <i className="h-[5px] w-[5px] border border-[#777] bg-[#ccc]" />
        <span className="border border-[#bbb] bg-[#f0f0f0] px-[3px] font-['Noto_Sans_Mono_CJK_KR','Noto_Sans_CJK_KR',sans-serif] leading-[13px] text-[#333]">한빛레이저 매물대 수(13)</span>
      </div>
      <span className="absolute left-[15px] -translate-y-1/2 text-[#f00000]" style={topPct(125, PLOT)}>최고 6,530 (-3,06%, 15:19)</span>
      <span className="absolute right-[3px] -translate-y-1/2 text-[#993300]" style={topPct(126, PLOT)}>전일종가 6,530 (0,00%)</span>
      <span className="absolute right-[3px] -translate-y-1/2 text-[#00e000]" style={topPct(254, PLOT)}>당일시가 6,480 (-0,77%)</span>
      <span className="absolute -translate-y-1/2 whitespace-nowrap text-[#0000e0]" style={{ ...topPct(844, PLOT), ...leftPct(1343) }}>최저 6,240 (1,44%, 13:57)</span>
    </div>
    <div className="relative w-[47px] shrink-0 overflow-hidden border-l border-[#999] bg-white">
      <Ticks list={ratioLabels} box={PLOT} side="right" between={4} />
      <div className="whitespace-nowrap leading-[12px] text-[#ee1c0c]">LC:1,44</div>
      <div className="whitespace-nowrap leading-[12px] text-[#1258cc]">HC:-3,06</div>
      {ratioLabels.map(([y, t]) => <AxisLabel key={t} y={y} box={PLOT} side="right">{t}</AxisLabel>)}
      <div className="absolute left-1 w-10 bg-[#1258cc] pl-1 leading-[13px] text-white" style={topPct(613, PLOT)}>6,330</div>
      <div className="absolute left-2 whitespace-nowrap leading-[13px] text-[#1258cc]" style={topPct(626, PLOT)}>-3,06%</div>
      <CursorTag y={695} className="left-1 w-[42px]" />
    </div>
  </div>
);

const SubPanel = () => (
  <div className="flex h-[156px] shrink-0 border-t border-[#999]">
    <div className="relative w-[43px] shrink-0 overflow-hidden border-r border-[#999] bg-white">
      {subLeft.map(([y, t]) => (
        <span key={y} className="absolute right-[6px] -translate-y-1/2 text-[#444]" style={topPct(y, SUB)}>{t}</span>
      ))}
      <Ticks list={[...subLeft, [1036]]} box={SUB} side="left" between={1} />
    </div>
    <div className="min-w-0 flex-1"><SubChart /></div>
    <div className="relative w-[47px] shrink-0 overflow-hidden border-l border-[#999] bg-white">
      <button type="button" aria-label="지표 닫기" className="absolute right-[2px] top-1 flex h-[7px] w-2 items-center justify-center bg-[#333]">
        <svg width="5" height="5" viewBox="0 0 5 5" stroke="#fff"><path d="M0 0l5 5M5 0L0 5" /></svg>
      </button>
      <Ticks list={[...subRight, [1036]]} box={SUB} side="right" between={4} />
      {subRight.map(([y, t]) => <AxisLabel key={t} y={y} box={SUB} side="right">{t}</AxisLabel>)}
    </div>
  </div>
);

const TimeAxis = () => (
  <div className="flex h-[18px] shrink-0 border-y border-[#999] bg-white leading-4 text-[#444]">
    <div className="w-[43px] shrink-0 border-r border-[#999]" />
    <div className="relative min-w-0 flex-1">
      <span className="pl-px font-bold">04/01</span>
      {timeTicks.map(([x, t]) => (
        <span key={x} className="absolute top-0 h-4 border-l border-[#999]" style={leftPct(x)}>{t}</span>
      ))}
      <div className="absolute -top-px h-[18px] whitespace-nowrap border border-black bg-[#ffdd70] px-px" style={leftPct(1112)}>
        2025/04/02(수) 12:40:20
      </div>
    </div>
    <div className="w-[47px] shrink-0 overflow-hidden whitespace-nowrap border-l border-[#999] pl-2">15:17:5</div>
  </div>
);

const ScrollButton = ({ label, d }) => (
  <button type="button" aria-label={label} className="flex h-4 w-4 items-center justify-center border border-[#888] bg-[#f2f2f2]">
    <svg width="10" height="10" viewBox="0 0 10 10"><path d={d} fill="#000" /></svg>
  </button>
);

const DrawButton = ({ label, active, children }) => (
  <button type="button" aria-label={label} className={`flex h-4 w-[17px] items-center justify-center ${active ? 'bg-white' : ''}`}>
    <svg width="15" height="15" viewBox="0 0 15 15" fill="none" stroke="#555">{children}</svg>
  </button>
);

const Footer = () => (
  <footer className="flex h-[17px] shrink-0 items-center bg-[#f0f0f0]">
    <ScrollButton label="왼쪽으로" d="M7 1v8L3 5z" />
    <div className="flex h-4 flex-1 bg-[#f6f6f6]">
      <div className="w-[39%]" />
      <div className="flex-1 border border-b-2 border-[#888] border-t-[#ddd] bg-[#efefef]" />
    </div>
    <div className="flex gap-px pl-px">
      <ScrollButton label="재생" d="M3 1v8l4-4z" />
      <ScrollButton label="뒤로" d="M5 1v8L1 5zM9 1v8L5 5z" />
      <ScrollButton label="정지" d="M2 2h6v6H2z" />
      <ScrollButton label="앞으로" d="M1 1v8l4-4zM5 1v8l4-4z" />
    </div>
    <div className="ml-[5px] flex w-[70px] flex-col">
      <input type="range" aria-label="재생 속도" defaultValue={62} className="h-[11px] w-full appearance-none bg-[linear-gradient(#777,#777)] bg-size-[100%_2px] bg-center bg-no-repeat [&::-webkit-slider-thumb]:h-[11px] [&::-webkit-slider-thumb]:w-1 [&::-webkit-slider-thumb]:appearance-none [&::-webkit-slider-thumb]:border [&::-webkit-slider-thumb]:border-[#777] [&::-webkit-slider-thumb]:bg-[#eee]" />
      <svg width="70" height="4" viewBox="0 0 70 4"><path d="M2.5 0v4m7-4v4m7-4v4m7-4v4m7-4v4m6-4v4m7-4v4m7-4v4m6-4v4m7-4v4m6-4v4" stroke="#000" /></svg>
    </div>
    <div className="ml-[6px] flex text-[#444]">
      <DrawButton label="창 추가"><path d="M1 1h9v5M1 1v10h5M7 7h7v7H7zM10.5 7v7M7 10.5h7" /></DrawButton>
      <DrawButton label="창 복제"><path d="M1 1h9v4M1 1v9h4M5 6h9v8H5zM5 8h9" strokeWidth="1.4" /></DrawButton>
      <DrawButton label="범위"><path d="M0 2.5h13M0 12.5h13" strokeDasharray="1 1" /><path d="M1 10l3-4 3 3 5-4M13 1l2 2-2 1M13 11l2 2-2 1" stroke="#888" /></DrawButton>
      <DrawButton label="선택" active><path d="M0 4.5h15M3.5 0v15" /><path d="M6 6h5L9 8l4 4-1 1-4-4-2 2z" fill="#777" stroke="none" /></DrawButton>
      <DrawButton label="수평선"><path d="M0 2.5h15" strokeWidth="2" /><path d="M1 13l4-8 2 5 3-3 4 6" stroke="#999" /></DrawButton>
      <DrawButton label="수직선"><path d="M4.5 0v15" stroke="#a05060" /><path d="M1 12h2l4-7 2 5 3-3 2 5" stroke="#999" /></DrawButton>
      <DrawButton label="추세선"><path d="M2 13L12 1" stroke="#a05060" /><path d="M1 12l4-6 3 6 3-5 3 4" stroke="#999" /></DrawButton>
      <button type="button" aria-label="모두 지우기" className="flex h-4 w-[17px] items-center justify-center"><Eraser size={15} color="#666" strokeWidth={1.5} /></button>
      <DrawButton label="차트 복사"><path d="M5 1h9v8H5zM1 5h9v9H1zM2 11l2-3 2 2 3-3" strokeWidth="1.4" /></DrawButton>
      <button type="button" aria-label="돋보기" className="flex h-4 w-[17px] items-center justify-center"><Search size={14} /></button>
      <button type="button" aria-label="축소" className="flex h-4 w-[17px] items-center justify-center"><Minus size={13} strokeWidth={3} /></button>
      <button type="button" aria-label="확대" className="flex h-4 w-[17px] items-center justify-center"><Plus size={13} strokeWidth={3} /></button>
      <button type="button" aria-label="자동" className="h-4 w-[17px] font-['Liberation_Sans',sans-serif] text-[14px] font-bold leading-4">A</button>
    </div>
  </footer>
);

const App = () => (
  <div className="flex h-screen flex-col overflow-hidden bg-black pb-[3px] pt-px font-['Noto_Sans_Mono_CJK_KR','Noto_Sans_CJK_KR',sans-serif] text-[12px] leading-4">
    <TitleBar />
    <main className="mx-[3px] flex min-h-0 flex-1 flex-col bg-[#d0d0d0] pt-[5px]">
      <Toolbar />
      <div className="h-[3px] shrink-0" />
      <QuoteBar />
      <div className="mt-[2px] flex min-h-0 flex-1 flex-col bg-[#e8e8e8] px-[3px] pb-1 pt-px">
        <section className="flex min-h-0 flex-1 flex-col border border-b-0 border-[#999] font-['Noto_Sans_CJK_KR',sans-serif]">
          <MainPanel />
          <SubPanel />
          <TimeAxis />
        </section>
        <Footer />
      </div>
    </main>
  </div>
);

export default App;
